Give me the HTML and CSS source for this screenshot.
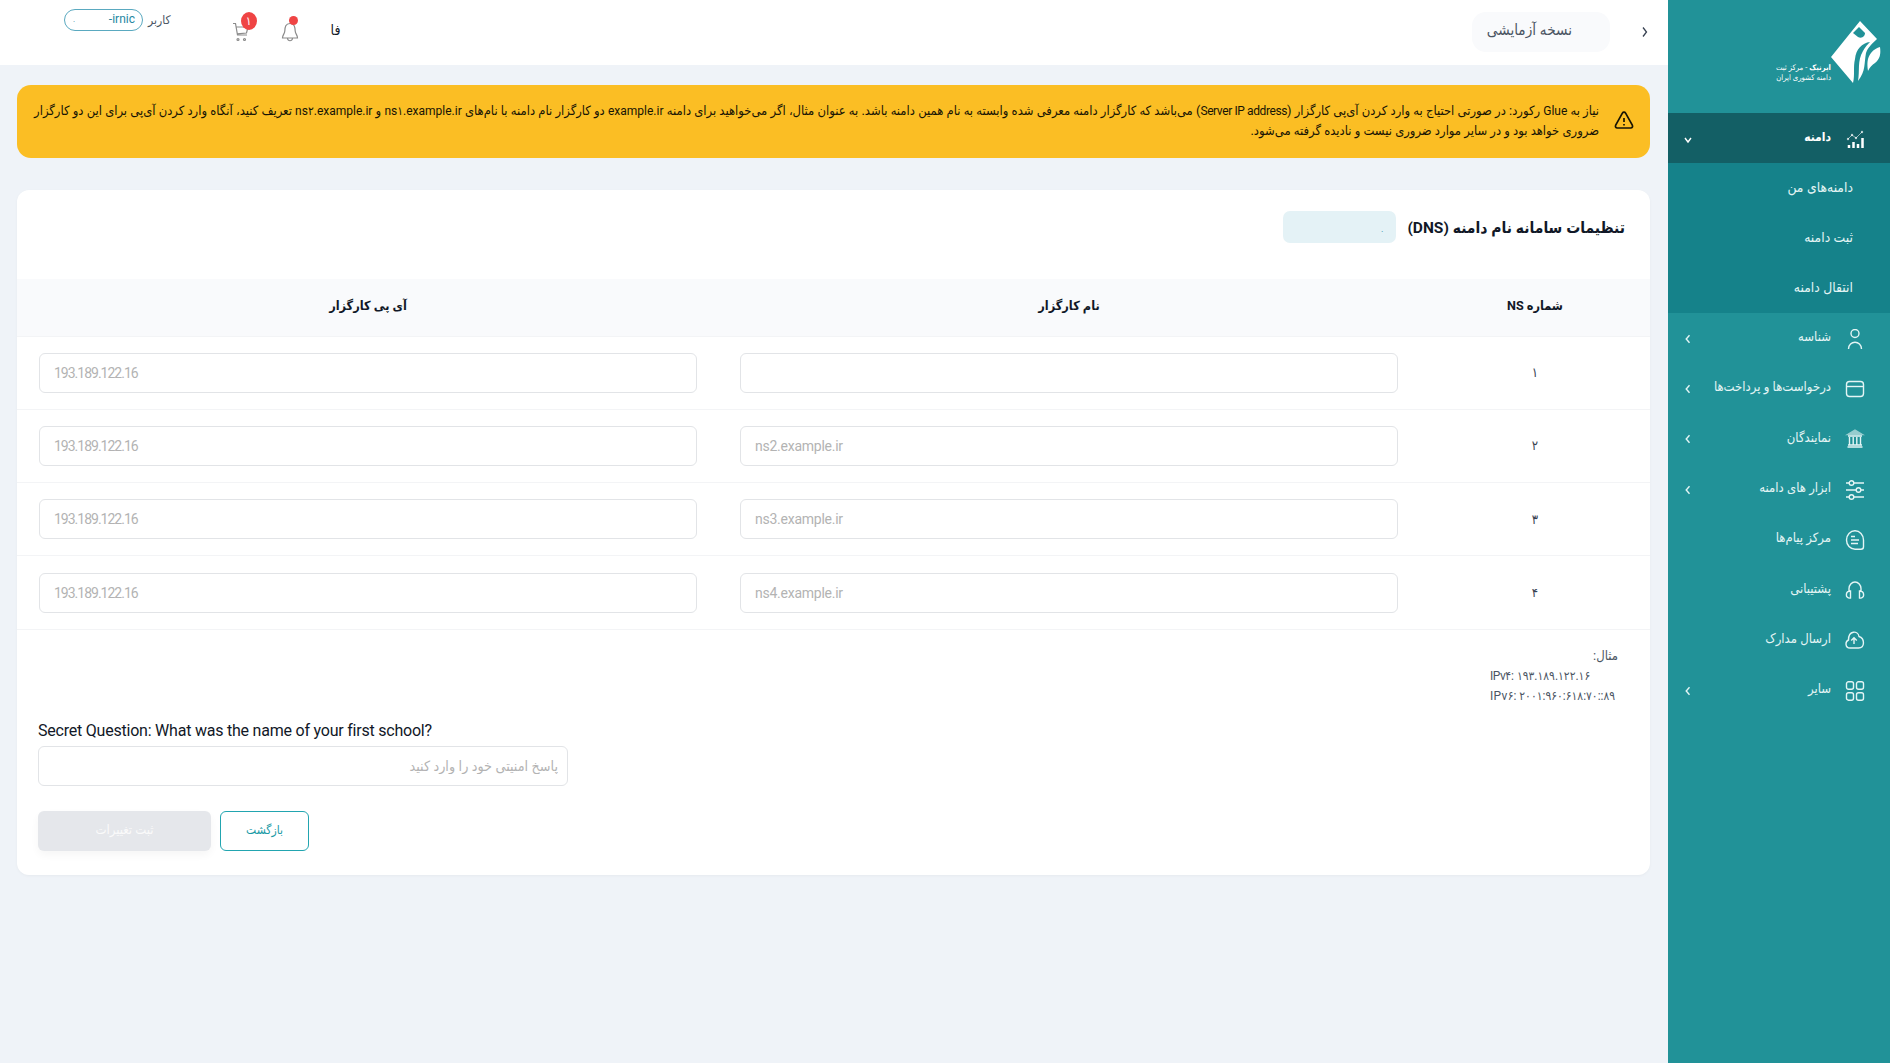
FILE: index.html
```
<!DOCTYPE html>
<html lang="fa" dir="rtl">
<head>
    <meta charset="utf-8">
    <title>تنظیمات سامانه نام دامنه (DNS)</title>
    <link rel="stylesheet" href="styles.css">
</head>
<body>
    <aside class="sidebar">
        <div class="logo">
            <svg class="logo-mark" viewBox="0 0 50 62">
                <path fill="#fff" d="M29 0 L46 18 C42 22 37 26 35 32 C33 42 35 50 27 60 C29 50 26 40 32 30 C34 26 37 23 39 21 C31 22 25 28 24 38 C22 46 24 54 22 62 L0 36 Z"/>
                <path fill="#fff" d="M49 26 C50 33 49 38 44 42 C41 44 39 46 37 50 C36 43 36 37 40 32 C43 28 46 27 49 26 Z"/>
                <path fill="#219298" d="M28 6 L34 12 C34 15 31 18 27 16 L22 12 Z"/>
            </svg>
            <div class="logo-text">
                <div><b>ایرنیک</b> - مرکز ثبت</div>
                <div>دامنه کشوری ایران</div>
            </div>
        </div>
        <nav class="menu">
            <a class="menu-item active">
                <svg class="icon" viewBox="0 0 20 20"><path d="M3 10l4-4 4 3 6-6" stroke-width=".8" opacity=".7"/><g fill="currentColor" stroke="none" opacity=".7"><circle cx="3" cy="10" r="1.200"/><circle cx="7" cy="6" r="1.200"/><circle cx="11" cy="9" r="1.200"/><circle cx="17" cy="3" r="1.200"/></g><path d="M4 16v3M8.500 13v6M13 15v4M17.500 9v10" stroke-width="2.500"/></svg>
                <span>دامنه</span>
                <svg class="arrow" viewBox="0 0 10 10"><path d="M2 3l3 4 3-4"/></svg>
            </a>
            <div class="submenu">
                <a>دامنه‌های من</a>
                <a>ثبت دامنه</a>
                <a>انتقال دامنه</a>
            </div>
            <a class="menu-item">
                <svg class="icon" viewBox="0 0 20 20"><circle cx="10" cy="4.500" r="4"/><path d="M3.500 20c0-9 13-9 13 0"/></svg>
                <span>شناسه</span>
                <svg class="arrow" viewBox="0 0 10 10"><path d="M6.500 1.200L3.200 5l3.300 3.800"/></svg>
            </a>
            <a class="menu-item">
                <svg class="icon" viewBox="0 0 20 20"><rect x="1.500" y="2.500" width="17" height="15" rx="3"/><path d="M1.500 7.500h17"/></svg>
                <span>درخواست‌ها و پرداخت‌ها</span>
                <svg class="arrow" viewBox="0 0 10 10"><path d="M6.500 1.200L3.200 5l3.300 3.800"/></svg>
            </a>
            <a class="menu-item">
                <svg class="icon" viewBox="0 0 20 20"><path class="roof" d="M10 1l7.500 4.500h-15z"/><path d="M4.500 8v8M8.200 8v8M11.800 8v8M15.500 8v8M3 7h14M3 16h14M2.500 18h15"/></svg>
                <span>نمایندگان</span>
                <svg class="arrow" viewBox="0 0 10 10"><path d="M6.500 1.200L3.200 5l3.300 3.800"/></svg>
            </a>
            <a class="menu-item">
                <svg class="icon" viewBox="0 0 20 20"><path d="M1 3h3M9 3h10M1 10h10M16 10h3M1 17h3M9 17h10"/><circle cx="6.500" cy="3" r="2.300"/><circle cx="13.500" cy="10" r="2.300"/><circle cx="6.500" cy="17" r="2.300"/></svg>
                <span>ابزار های دامنه</span>
                <svg class="arrow" viewBox="0 0 10 10"><path d="M6.500 1.200L3.200 5l3.300 3.800"/></svg>
            </a>
            <a class="menu-item">
                <svg class="icon" viewBox="0 0 20 20"><path d="M10 .8a8.500 9.200 0 0 0 0 18.400h6a2.500 2.500 0 0 0 2.500-2.500V10A8.500 9.200 0 0 0 10 .8z"/><path d="M6 6.500h4M6 10h8M6 13.500h7"/></svg>
                <span>مرکز پیام‌ها</span>
            </a>
            <a class="menu-item">
                <svg class="icon" viewBox="0 0 20 20"><path d="M4 11V8.500a6 6.500 0 0 1 12 0V11M5.500 11v7C0 19 0 11 5.500 11zM14.500 11v7C20 19 20 11 14.500 11z"/></svg>
                <span>پشتیبانی</span>
            </a>
            <a class="menu-item">
                <svg class="icon" viewBox="0 0 20 20"><path d="M5 18C0 18 0 11.500 3.500 10 3.500 0 13 .5 14 6.500c6 2 6 11.500-.5 11.500z"/><path d="M9 14V8M6.200 10.500L9 7.700l2.800 2.800"/></svg>
                <span>ارسال مدارک</span>
            </a>
            <a class="menu-item">
                <svg class="icon" viewBox="0 0 20 20"><rect x="1.500" y=".8" width="7" height="7.500" rx="2"/><rect x="11.500" y=".8" width="7" height="7.500" rx="2"/><rect x="1.500" y="11.700" width="7" height="7.500" rx="2"/><rect x="11.500" y="11.700" width="7" height="7.500" rx="2"/></svg>
                <span>سایر</span>
                <svg class="arrow" viewBox="0 0 10 10"><path d="M6.500 1.200L3.200 5l3.300 3.800"/></svg>
            </a>
        </nav>
    </aside>

    <div class="page">
        <header class="topbar">
            <svg class="collapse" viewBox="0 0 8 12"><path d="M2 1.500L5.500 6 2 10.500"/></svg>
            <div class="version">نسخه آزمایشی</div>
            <div class="lang">فا</div>
            <div class="action bell">
                <svg viewBox="0 0 18 20"><path d="M9 1.500C4.500 1.500 4 5 3.800 9 3.600 12 1.500 13 1.500 16h15c0-3-2.100-4-2.300-7C14 5 13.500 1.500 9 1.500zM6.500 16.500c.5 3 4.500 3 5 0"/></svg>
                <span class="dot"></span>
            </div>
            <div class="action cart">
                <svg viewBox="0 0 18 20"><path d="M1 1.500h2.500L5.500 13H15M4.200 5H16l-1.500 6-9.300.8"/><circle cx="6" cy="17.500" r="1"/><circle cx="12.500" cy="17.500" r="1"/></svg>
                <span class="count">۱</span>
            </div>
            <div class="user">
                <span class="user-label">کاربر</span>
                <span class="user-id" dir="ltr"><i>.</i><span>-irnic</span></span>
            </div>
        </header>

        <main>
            <div class="alert">
                <svg viewBox="0 0 20 20"><path d="M10 2.200c.7 0 1.200.3 1.600 1l6.700 12c.7 1.400 0 2.800-1.600 2.800H3.300c-1.600 0-2.300-1.400-1.600-2.800l6.700-12c.4-.7.900-1 1.600-1z"/><path d="M10 8v4M10 14v1.500"/></svg>
                <div class="alert-text">
                    <div>نیاز به <bdi>Glue</bdi> رکورد: در صورتی احتیاج به وارد کردن آی‌پی کارگزار (<bdi class="tight">Server IP address</bdi>) می‌باشد که کارگزار دامنه معرفی شده وابسته به نام همین دامنه باشد. به عنوان مثال، اگر می‌خواهید برای دامنه <bdi>example.ir</bdi> دو کارگزار نام دامنه با نام‌های <bdi>ns۱.example.ir</bdi> و <bdi>ns۲.example.ir</bdi> تعریف کنید، آنگاه وارد کردن آی‌پی برای این دو کارگزار</div>
                    <div>ضروری خواهد بود و در سایر موارد ضروری نیست و نادیده گرفته می‌شود.</div>
                </div>
            </div>

            <section class="card">
                <div class="card-head">
                    <h1>تنظیمات سامانه نام دامنه (DNS)</h1>
                    <span class="domain">.</span>
                </div>
                <div class="table">
                    <div class="row head">
                        <div>شماره NS</div>
                        <div>نام کارگزار</div>
                        <div>آی پی کارگزار</div>
                    </div>
                    <div class="row">
                        <div>۱</div>
                        <div><input dir="ltr" type="text"></div>
                        <div><input class="ip-input" dir="ltr" type="text" placeholder="193.189.122.16"></div>
                    </div>
                    <div class="row">
                        <div>۲</div>
                        <div><input dir="ltr" type="text" placeholder="ns2.example.ir"></div>
                        <div><input class="ip-input" dir="ltr" type="text" placeholder="193.189.122.16"></div>
                    </div>
                    <div class="row">
                        <div>۳</div>
                        <div><input dir="ltr" type="text" placeholder="ns3.example.ir"></div>
                        <div><input class="ip-input" dir="ltr" type="text" placeholder="193.189.122.16"></div>
                    </div>
                    <div class="row">
                        <div>۴</div>
                        <div><input dir="ltr" type="text" placeholder="ns4.example.ir"></div>
                        <div><input class="ip-input" dir="ltr" type="text" placeholder="193.189.122.16"></div>
                    </div>
                </div>
                <div class="example">
                    <div class="example-title">مثال:</div>
                    <div class="ip" dir="ltr">
                        <div class="v4"><bdo dir="ltr">IPv۴: ۱۹۳.۱۸۹.۱۲۲.۱۶</bdo></div>
                        <div class="v6"><bdo dir="ltr">IPv۶: ۲۰۰۱:۹۶۰:۶۱۸:۷۰::۸۹</bdo></div>
                    </div>
                </div>
                <div class="secret" dir="ltr">
                    <label for="answer">Secret Question: What was the name of your first school?</label>
                    <input id="answer" dir="rtl" type="text" placeholder="پاسخ امنیتی خود را وارد کنید">
                    <div class="buttons">
                        <button class="btn submit" disabled>ثبت تغییرات</button>
                        <button class="btn back">بازگشت</button>
                    </div>
                </div>
            </section>
        </main>
    </div>
</body>
</html>
```
FILE: styles.css
```
* { box-sizing: border-box; }
body { margin: 0; height: 1063px; display: flex; overflow: hidden; background: #eff3f8; color: #111827; font-family: Roboto, "DejaVu Sans Condensed", "DejaVu Sans", sans-serif; font-size: 12px; }
svg { fill: none; stroke: currentColor; flex: none; }
button, input { font: inherit; }

/* sidebar */
.sidebar { width: 222px; flex: none; background: #219298; color: #e4f5f5; font-size: 13px; }
.logo { height: 113px; padding: 21px 9px 0 0; display: flex; }
.logo-mark { width: 50px; height: 62px; stroke: none; }
.logo-text { margin-top: 42px; font-size: 7.7px; line-height: 10px; white-space: nowrap; color: #fff; }
.menu-item { height: 50.3px; display: flex; align-items: center; padding: 0 25px 0 15px; }
.menu-item span { margin-right: 14px; flex: 1; line-height: 20px; padding-bottom: 2px; white-space: nowrap; }
.menu-item.active { height: 50px; background: #135f65; color: #fff; font-size: 12px; font-weight: bold; }
.icon { width: 20px; height: 20px; margin-top: 1px; stroke-width: 1.4; }
.icon .roof { fill: currentColor; opacity: .6; }
.arrow { width: 10px; height: 10px; margin-top: 1px; stroke-width: 1.4; }
.active .arrow { margin-top: 3px; }
.submenu { background: #15828a; height: 150px; font-size: 13.8px; }
.submenu a { display: block; height: 50px; line-height: 48px; padding-right: 37px; }

/* topbar */
.page { flex: 1; min-width: 0; }
.topbar { height: 65px; background: #fff; display: flex; align-items: flex-start; padding: 0 19px 0 64px; }
.collapse { width: 8px; height: 12px; margin: 26px 0 0 31px; stroke: #374151; stroke-width: 1.3; }
.version { width: 138px; height: 40px; margin-top: 12px; padding: 0 38px 0 0; border-radius: 14px; background: #f9fafc; color: #4b5563; font-size: 15.2px; line-height: 37px; white-space: nowrap; }
.lang { margin: 20px auto 0 32px; font-size: 14px; line-height: 20px; }
.action { position: relative; width: 18px; height: 20px; margin: 22px 0 0 31px; color: #8b8b8b; }
.action svg { width: 18px; height: 20px; display: block; stroke-width: 1.2; }
.dot { position: absolute; top: -6px; left: 8px; width: 9px; height: 9px; border-radius: 50%; background: #ef4444; }
.count { position: absolute; top: -10px; left: 9px; width: 16px; height: 18px; border-radius: 50%; background: #ef4444; color: #fff; font-size: 12px; line-height: 18px; text-align: center; }
.cart { margin-left: 0; }
.user { display: flex; align-items: center; margin: 9px 61px 0 0; height: 22px; color: #4b5563; }
.user-label { margin-left: 5px; }
.user-id { width: 79px; height: 22px; display: flex; justify-content: space-between; padding: 0 7px 0 8px; border: 1px solid #5aa9c0; border-radius: 11px; color: #2587a2; line-height: 19px; }
.user-id i { font-style: normal; font-size: 8px; }

/* content */
main { padding: 20px 18px 0 17px; }
.alert { height: 73px; display: flex; align-items: center; padding: 0 16px; border-radius: 14px; background: #fbbe24; color: #171404; }
.alert svg { width: 20px; height: 20px; margin-top: -3px; stroke-width: 1.7; }
.alert-text { margin: -1px 15px 0 0; font-size: 12.9px; line-height: 20px; white-space: nowrap; }
.alert-text bdi { font-size: 12px; }
.alert-text .tight { letter-spacing: -.4px; }
.card { height: 685px; margin-top: 32px; border-radius: 12px; background: #fff; box-shadow: 0 1px 3px rgba(0, 0, 0, .04); }
.card-head { height: 89px; padding: 21px 25px 0 0; display: flex; }
h1 { margin: 0 0 0 11px; font-size: 15.5px; line-height: 34px; white-space: nowrap; }
.domain { width: 113px; height: 32px; border-radius: 7px; background: #e4f2f6; color: #2587a2; font-size: 9px; line-height: 36px; padding-right: 13px; }
.row { height: 73.3px; display: grid; grid-template-columns: 230px 702px 1fr; align-items: center; text-align: center; border-bottom: 1px solid #f3f4f6; font-size: 13px; }
.row > div { padding: 0 22px; color: #374151; }
.row > div:last-child { padding-right: 21px; }
.row.head { height: 57.5px; background: #f9fafc; font-size: 12.6px; font-weight: bold; }
.row.head > div { color: #111827; padding-bottom: 4px; }
input { display: block; width: 100%; height: 40px; padding: 0 14px; border: 1px solid #e2e4e7; border-radius: 6px; outline: none; background: #fff; font-size: 14px; letter-spacing: -.25px; }
input::placeholder { color: #b3b3b3; opacity: 1; }
.ip-input { letter-spacing: -1px; }
.example { padding: 16px 32px 0 0; height: 91.5px; line-height: 20px; color: #4b5563; }
.example-title { height: 20px; font-size: 13px; }
.ip { width: 128px; white-space: nowrap; }
.v4 { letter-spacing: -.5px; }
.v6 { letter-spacing: .3px; }
.secret { padding-left: 21px; }
.secret label { display: block; height: 25px; line-height: 20px; font-size: 16px; letter-spacing: -.22px; white-space: nowrap; }
.secret input { width: 530px; padding: 0 9px; font-size: 14.2px; letter-spacing: normal; }
.buttons { display: flex; gap: 9px; margin-top: 25px; }
.btn { height: 40px; padding: 0 0 3px; border: 0; border-radius: 6px; }
.submit { width: 173px; background: #e5e7eb; color: #fafafa; font-size: 13px; box-shadow: 0 4px 8px rgba(0, 0, 0, .04); }
.back { width: 89px; background: #fff; border: 1px solid #22a5b0; color: #1b9aa5; }
```
